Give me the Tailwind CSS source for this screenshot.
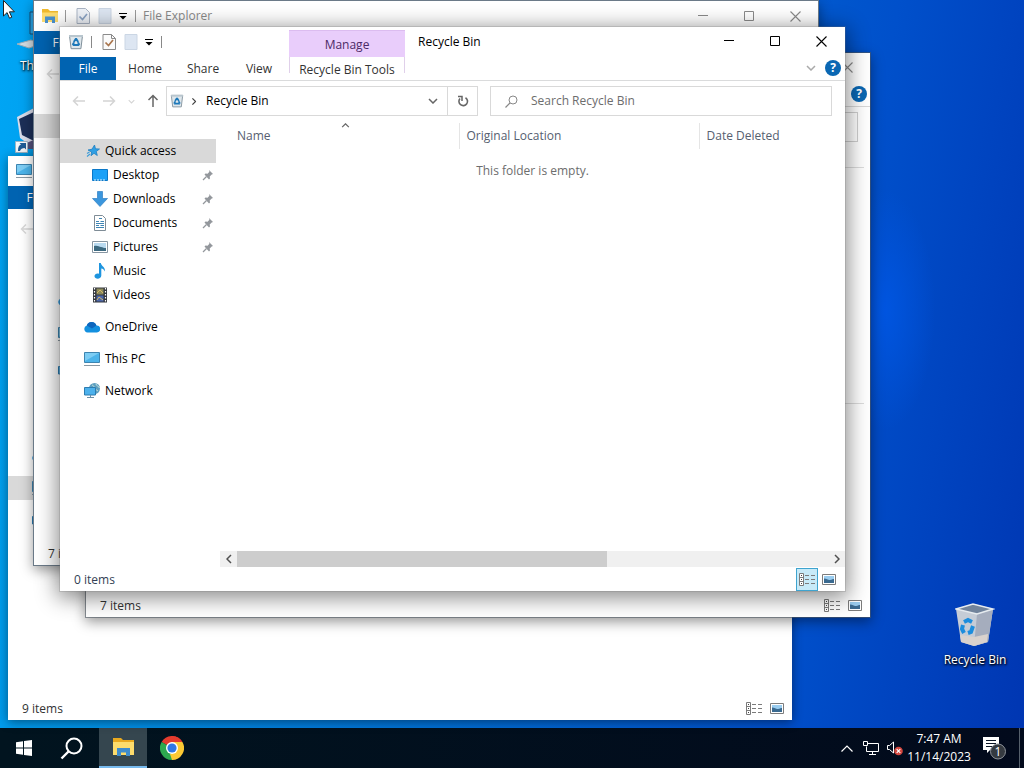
<!DOCTYPE html>
<html lang="en">
<head>
    <meta charset="UTF-8">
    <meta name="viewport" content="width=device-width, initial-scale=1.0">
    <title>Desktop</title>
    <script src="https://cdn.jsdelivr.net/npm/@tailwindcss/browser@4"></script>
</head>
<body class="h-screen overflow-hidden font-['Open_Sans','Noto_Sans',sans-serif] text-xs text-black">
    <!-- shared icons -->
    <svg class="hidden">
        <symbol id="i-bin" viewBox="0 0 16 16">
            <path d="M1.5 1.5h13l-1.6 13.2H3.1z" fill="#dfe7ec" stroke="#7f8f9a"/>
            <path d="M1 1h14v2H1z" fill="#b9c6ce"/>
            <path d="M8 4.6l2.2 3.4M8 4.6L5.8 8M4.6 11h6.8M4.6 11l1.4-2.6M11.4 11L10 8.4" stroke="#1d78b9" stroke-width="1.9" fill="none"/>
        </symbol>
        <symbol id="i-check" viewBox="0 0 14 16">
            <path d="M1 .5h8.5l4 4V15.5H1z" fill="#fbfbfb" stroke="#8a8a8a"/>
            <path d="M9.5 .5v4h4" fill="none" stroke="#8a8a8a"/>
            <path d="M3.5 8.5l3 3L11 6" fill="none" stroke="#a9754d" stroke-width="1.7"/>
        </symbol>
        <symbol id="i-check-off" viewBox="0 0 14 16">
            <path d="M1 .5h8.5l4 4V15.5H1z" fill="#eef2f8" stroke="#a9b4c4"/>
            <path d="M3.5 8.5l3 3L11 6" fill="none" stroke="#8ba3c4" stroke-width="1.7"/>
        </symbol>
        <symbol id="i-page" viewBox="0 0 14 16">
            <path d="M1 .5h12v15H1z" fill="#dde6f2" stroke="#cbd6e4"/>
        </symbol>
        <symbol id="i-more" viewBox="0 0 8 8">
            <path d="M0 1h8v1H0zM.5 4h7L4 7.5z" fill="currentColor"/>
        </symbol>
        <symbol id="i-folder" viewBox="0 0 18 16">
            <path d="M1 1h6l2 2h8v11H1z" fill="#efb92e"/>
            <path d="M1 4.5h16V14H1z" fill="#fcdb70"/>
            <path d="M4 15V8.5h10V15h-3v-3H7v3z" fill="#4a90cc"/>
        </symbol>
        <symbol id="i-star" viewBox="0 0 16 16">
            <path d="M9.5 2l1 3.800 4 .2-3.200 2.500 1 4-3.300-2.200-3 2.400.6-3.700L3 7l4-.8z" fill="#2f9fe4" stroke="#1f7fc0" stroke-width=".8"/>
            <path d="M2 13.500l3-2.500M2 10.500l2.500-1.500" stroke="#3f9dd8" stroke-width="1.2"/>
        </symbol>
        <symbol id="i-desktop" viewBox="0 0 16 14">
            <path d="M.5 1.500h15v11H.5z" fill="#1ba1f7" stroke="#0a78c8"/>
            <path d="M2 12h12" stroke="#e4f4ff" stroke-dasharray="2 1"/>
        </symbol>
        <symbol id="i-down" viewBox="0 0 16 16">
            <path d="M5.5 .5h5v7h5L8 15.500.5 7.500h5z" fill="#3b96dd" stroke="#2f7fc4" stroke-width=".7"/>
        </symbol>
        <symbol id="i-doc" viewBox="0 0 14 16">
            <path d="M1.5 .5h8l3 3v12h-11z" fill="#fff" stroke="#7f8c96"/>
            <path d="M3 6.500h3M7.500 6.500H11M3 8.500h8M3 10.500h3M7.500 10.500H11M3 12.500h8M6 3.500h3" stroke="#3f85b4"/>
        </symbol>
        <symbol id="i-pic" viewBox="0 0 16 12">
            <path d="M.5 .5h15v11H.5z" fill="#fff" stroke="#8796a2"/>
            <path d="M2 2h12v8H2z" fill="#b9daf0"/>
            <path d="M2 5c3-1 5 .5 7 1s3 1 5 1V10H2z" fill="#3c6980"/>
        </symbol>
        <symbol id="i-music" viewBox="0 0 12 16">
            <path d="M5 0h1.800c.3 3 4.700 4 4.200 8.500-.6-1.600-2-2.700-3.700-3V12.500c0 4.200-7.100 4-6.800.5.2-2.200 2.500-3 4.500-2.200z" fill="#1e95df"/>
        </symbol>
        <symbol id="i-video" viewBox="0 0 14 16">
            <path d="M0 .5h14v15H0z" fill="#33363c"/>
            <path d="M3.5 1.500h7v6h-7z" fill="#8c8a5c"/>
            <path d="M3.5 8.500h7v6h-7z" fill="#4a65a8"/>
            <path d="M4 6l3-3 3 3M4 13l2-3 4 3" stroke="#d6b865" fill="none"/>
            <path d="M1.5 1v14M12.5 1v14" stroke="#fff" stroke-width="1.2" stroke-dasharray="1.5 1.5"/>
        </symbol>
        <symbol id="i-cloud" viewBox="0 0 16 12">
            <path d="M3.500 11.500a3.600 3.600 0 0 1-.7-7A5 5 0 0 1 12.400 4.500a3.500 3.500 0 0 1 .6 7z" fill="#1490df"/>
            <path d="M2.800 4.500A5 5 0 0 1 12.400 4.500L8 7.500z" fill="#0f66bd"/>
        </symbol>
        <symbol id="i-pc" viewBox="0 0 16 16">
            <path d="M.5 1.500h15v10H.5z" fill="#4db4ea" stroke="#3d84b0"/>
            <path d="M1 2h14L1 10z" fill="#7dcdf4"/>
            <path d="M0 14.500h16" stroke="#8a98a2"/>
        </symbol>
        <symbol id="i-net" viewBox="0 0 16 16">
            <circle cx="10.500" cy="5.500" r="5.500" fill="#5d9fc0"/>
            <path d="M8 2c3 1 2 4 6 6M12 1c0 2 3 2 3.500 4" stroke="#c5dfd8" fill="none"/>
            <path d="M.5 4.500h11v7.500H.5z" fill="#4cb1ec" stroke="#2c7cb0"/>
            <path d="M3 14.500h7M6.500 12v2" stroke="#6c8fa6"/>
        </symbol>
        <symbol id="i-pin" viewBox="0 0 12 12">
            <path d="M7 1L11 5l-1.300.4-2 2 .3 2.100-1 1L2.500 5.500l1-1 2.100.3 1.800-2z" fill="#93979c"/>
            <path d="M4.500 7.500l-3.500 3.500" stroke="#93979c" stroke-width="1.3"/>
        </symbol>
        <symbol id="i-details" viewBox="0 0 17 13">
            <path d="M.5 .5h4v12h-4zM.5 4.500h4M.5 8.500h4" fill="#fff" stroke="#7b7b7b"/>
            <path d="M2 2.500h1M2 6.500h1M2 10.500h1" stroke="#444"/>
            <path d="M6 2.500h4M12 2.500h4M6 6.500h4M12 6.500h4M6 10.500h4M12 10.500h4" stroke="#7b7b7b"/>
        </symbol>
        <symbol id="i-thumbs" viewBox="0 0 14 11">
            <path d="M.5 .5h13v10H.5z" fill="#fff" stroke="#7c7c7c"/>
            <path d="M2 2h10v7H2z" fill="#9acdf0"/>
            <path d="M2 4.500c3 0 4 2 6 1.500s3-1 4-1V9H2z" fill="#3a6a90"/>
        </symbol>
        <symbol id="i-back" viewBox="0 0 14 12">
            <path d="M13 6H1.500M6 1.500L1.500 6 6 10.500" fill="none" stroke="currentColor" stroke-width="1.5"/>
        </symbol>
        <symbol id="i-close" viewBox="0 0 11 11">
            <path d="M.5 .5l10 10M10.5 .5l-10 10" stroke="currentColor" stroke-width="1.1"/>
        </symbol>
        <symbol id="i-max" viewBox="0 0 11 11"><path d="M.5 .5h9v9h-9z" fill="none" stroke="currentColor"/></symbol>
        <symbol id="i-min" viewBox="0 0 11 11"><path d="M0 4.500h10" stroke="currentColor"/></symbol>
        <symbol id="i-chev" viewBox="0 0 10 6"><path d="M1 1l4 4 4-4" fill="none" stroke="currentColor" stroke-width="1.5"/></symbol>
    </svg>

    <div class="flex h-full flex-col">
        <main class="relative flex-1 bg-[radial-gradient(ellipse_50px_120px_at_885px_310px,#0055e0_0%,transparent_100%),linear-gradient(100deg,#00a6f5_0%,#009fee_8%,#0074d8_45%,#0050cb_78%,#0044c0_88%,#0036b2_100%)]">

            <!-- desktop icons -->
            <div class="absolute left-3 top-2 w-10 text-white">
                <svg class="h-12 w-10" viewBox="0 0 40 48">
                    <path d="M18 4h20v22H18z" fill="#2aa8ec" stroke="#174e78"/>
                    <path d="M5 36l14-4 10 4-12 4z" fill="#d5dde3" stroke="#9fb0bb"/>
                </svg>
                <p class="pl-2 leading-5 [text-shadow:1px_1px_2px_#000,0_1px_3px_#000]">This</p>
            </div>
            <svg class="absolute left-3 top-[105px] h-12 w-8" viewBox="0 0 32 48">
                <path d="M5 12l17-9v40L8 33z" fill="#d9dcea"/>
                <path d="M7 14l15-7v29L10 30z" fill="#1c2f58"/>
                <path d="M12 39l12-5v10H12z" fill="#54517c"/>
                <path d="M3.5 36.500h12v11h-12z" fill="#f7f9fb" stroke="#9db6c7"/>
                <path d="M6 46c0-4 1-6 3-6.500L7.500 38H14v6.500L12.500 43c-2 0-4 1-4.500 3z" fill="#1f5d97"/>
            </svg>
            <div class="absolute right-3 top-[600px] flex w-[74px] flex-col items-center text-white">
                <svg class="h-12 w-10" viewBox="0 0 40 48">
                    <path d="M1 9l17-5 20 5-5 33-14 4L6 42z" fill="#c5ccd6"/>
                    <path d="M22 14l16-5-5 33-14 4z" fill="#a5adbd"/>
                    <path d="M1 9l17-5 20 5-16 5z" fill="#71839b" stroke="#e6ebef" stroke-width="1.5"/>
                    <path d="M5 35l14 2 14-3-1 8-13 4-13-4z" fill="#d9d2cd"/>
                    <path d="M9 22l4-2 4 2M18 26l-2 6-3 1M9 33l-2-4 1-4" fill="none" stroke="#1c8ddd" stroke-width="4"/>
                </svg>
                <p class="whitespace-nowrap leading-6 [text-shadow:1px_1px_2px_#000,0_1px_3px_#000]">Recycle Bin</p>
            </div>

            <!-- This PC window, at the back -->
            <section class="absolute left-2 top-[156px] flex h-[564px] w-[784px] flex-col bg-white [box-shadow:0_2px_10px_rgba(0,0,0,0.45)]">
                <div class="flex h-[30px] items-center pl-2"><svg class="size-4"><use href="#i-pc"/></svg></div>
                <div class="flex h-[23px]"><button class="w-14 bg-[#0063b1] text-white">File</button></div>
                <div class="flex h-10 items-center pl-3"><svg class="h-3 w-[14px] text-[#d8d8d8]"><use href="#i-back"/></svg></div>
                <div class="flex flex-1 flex-col pt-[195px]">
                    <div class="flex h-8 w-[156px] items-start pl-6 pt-[6px]"><svg class="h-3 w-4"><use href="#i-cloud"/></svg></div>
                    <div class="flex h-6 w-[156px] items-center bg-[#d9d9d9] pl-6"><svg class="size-4"><use href="#i-pc"/></svg></div>
                    <div class="mt-2 flex h-6 w-[156px] items-center pl-6"><svg class="size-4"><use href="#i-net"/></svg></div>
                </div>
                <div class="flex h-6 items-center gap-[7px] pl-[14px] pr-2 pt-px text-[#333]">
                    <span class="flex-1">9 items</span>
                    <svg class="h-[13px] w-[17px]"><use href="#i-details"/></svg>
                    <svg class="h-[11px] w-[14px]"><use href="#i-thumbs"/></svg>
                </div>
            </section>

            <!-- File Explorer window -->
            <section class="absolute left-[34px] top-px flex h-[564px] w-[784px] flex-col bg-white [box-shadow:0_0_0_1px_#6b7a88,0_4px_12px_1px_rgba(0,0,0,0.4)]">
                <div class="flex h-[30px] items-center text-[#8a8a8a]">
                    <div class="flex flex-1 items-center pl-[7px]">
                        <svg class="h-4 w-[18px]"><use href="#i-folder"/></svg>
                        <span class="ml-[6px] h-3 w-px bg-[#999]"></span>
                        <svg class="ml-[10px] h-4 w-[14px]"><use href="#i-check-off"/></svg>
                        <svg class="ml-2 h-4 w-[14px]"><use href="#i-page"/></svg>
                        <svg class="ml-[7px] size-2 text-black"><use href="#i-more"/></svg>
                        <span class="ml-2 h-3 w-px bg-[#999]"></span>
                        <span class="ml-[7px]">File Explorer</span>
                    </div>
                    <button class="flex w-[46px] justify-center" aria-label="Minimize"><svg class="size-[11px]"><use href="#i-min"/></svg></button>
                    <button class="flex w-[46px] justify-center" aria-label="Maximize"><svg class="size-[11px]"><use href="#i-max"/></svg></button>
                    <button class="flex w-[46px] justify-center" aria-label="Close"><svg class="size-[11px]"><use href="#i-close"/></svg></button>
                </div>
                <div class="flex h-[23px]"><button class="w-14 bg-[#0063b1] text-white">File</button></div>
                <div class="flex h-10 items-center pl-3"><svg class="h-3 w-[14px] text-[#d8d8d8]"><use href="#i-back"/></svg></div>
                <div class="flex flex-1 flex-col pt-5">
                    <div class="h-6 w-[156px] bg-[#d9d9d9]"></div>
                    <div class="mt-[156px] flex flex-col gap-5 pl-6">
                        <svg class="h-3 w-4"><use href="#i-cloud"/></svg>
                        <svg class="size-4"><use href="#i-pc"/></svg>
                        <svg class="size-4"><use href="#i-net"/></svg>
                    </div>
                </div>
                <div class="flex h-6 items-center pl-[14px] pt-px text-[#333]">7 items</div>
            </section>

            <!-- second File Explorer window -->
            <section class="absolute left-[86px] top-[53px] flex h-[564px] w-[784px] flex-col bg-white [box-shadow:0_0_0_1px_rgba(80,90,100,0.6),0_4px_12px_1px_rgba(0,0,0,0.4)]">
                <div class="flex h-[29px] items-center justify-end">
                    <button class="flex w-[46px] justify-center text-[#8a8a8a]" aria-label="Close"><svg class="size-[11px]"><use href="#i-close"/></svg></button>
                </div>
                <div class="flex h-[25px] items-center justify-end border-b border-[#d8d8d8] pr-[3px]">
                    <button class="size-4 rounded-full bg-[#0a67b3] text-center font-bold leading-4 text-white" aria-label="Help">?</button>
                </div>
                <div class="flex h-10 items-center justify-end pr-3"><div class="h-[30px] w-[342px] border border-[#d0d0d0]"></div></div>
                <div class="flex flex-1 flex-col pl-[160px] pr-[6px] pt-5">
                    <div class="h-[237px] border-y border-[#dcdcdc]"></div>
                </div>
                <div class="flex h-6 items-center gap-[7px] pl-[14px] pr-2 pt-px text-[#333]">
                    <span class="flex-1">7 items</span>
                    <svg class="h-[13px] w-[17px]"><use href="#i-details"/></svg>
                    <svg class="h-[11px] w-[14px]"><use href="#i-thumbs"/></svg>
                </div>
            </section>

            <!-- Recycle Bin window, active -->
            <section class="absolute left-[60px] top-[27px] flex h-[564px] w-[785px] flex-col bg-white [box-shadow:0_0_0_1px_rgba(120,120,120,0.25),0_4px_20px_3px_rgba(0,0,0,0.45)]">
                <header class="flex h-[54px] border-b border-[#dadbdc]">
                    <div class="flex w-[229px] flex-col">
                        <div class="flex h-[30px] items-center pl-2">
                            <svg class="size-4"><use href="#i-bin"/></svg>
                            <span class="ml-[7px] h-3 w-px bg-[#888]"></span>
                            <svg class="ml-[10px] h-4 w-[14px]"><use href="#i-check"/></svg>
                            <svg class="ml-2 h-4 w-[14px]"><use href="#i-page"/></svg>
                            <button class="ml-[7px]" aria-label="Customize toolbar"><svg class="size-2"><use href="#i-more"/></svg></button>
                            <span class="ml-2 h-3 w-px bg-[#888]"></span>
                        </div>
                        <nav class="flex h-[23px] text-[#333]">
                            <button class="w-14 bg-[#0063b1] pt-px text-white">File</button>
                            <button class="w-[58px] pt-px">Home</button>
                            <button class="w-[58px] pt-px">Share</button>
                            <button class="w-[54px] pt-px">View</button>
                        </nav>
                    </div>
                    <div class="flex w-[116px] flex-col pt-[3px]">
                        <div class="flex h-[27px] items-center justify-center border-t border-[#dcbcf0] bg-[#e9cdfb] pt-px text-[#4c2a66]">Manage</div>
                        <button class="h-4 border-x border-[#e0d0ea] pt-[5px] text-[#333]"><span class="whitespace-nowrap">Recycle Bin Tools</span></button>
                    </div>
                    <div class="flex flex-1 flex-col">
                        <div class="flex h-[29px] items-center pr-px">
                            <h1 class="flex-1 pl-[13px]">Recycle Bin</h1>
                            <button class="flex w-[46px] justify-center" aria-label="Minimize"><svg class="size-[11px]"><use href="#i-min"/></svg></button>
                            <button class="flex w-[46px] justify-center" aria-label="Maximize"><svg class="size-[11px]"><use href="#i-max"/></svg></button>
                            <button class="flex w-[46px] justify-center" aria-label="Close"><svg class="size-[11px]"><use href="#i-close"/></svg></button>
                        </div>
                        <div class="flex h-6 items-center justify-end gap-[9px] pr-1">
                            <button class="text-[#aaa]" aria-label="Expand ribbon"><svg class="h-[6px] w-[10px]"><use href="#i-chev"/></svg></button>
                            <button class="size-4 rounded-full bg-[#0a67b3] text-center font-bold leading-4 text-white" aria-label="Help">?</button>
                        </div>
                    </div>
                </header>

                <div class="flex h-10 items-center pr-[13px]">
                    <div class="flex w-[106px] items-center pl-3 text-[#d4d4d4]">
                        <button aria-label="Back"><svg class="h-3 w-[14px]"><use href="#i-back"/></svg></button>
                        <button class="ml-4 rotate-180" aria-label="Forward"><svg class="h-3 w-[14px]"><use href="#i-back"/></svg></button>
                        <button class="ml-3" aria-label="Recent"><svg class="h-[5px] w-[7px]"><use href="#i-chev"/></svg></button>
                        <button class="ml-[11px] rotate-90 text-[#666]" aria-label="Up"><svg class="h-3 w-[14px]"><use href="#i-back"/></svg></button>
                    </div>
                    <div class="flex h-[30px] flex-1 items-center border border-[#d9d9d9]">
                        <svg class="ml-[3px] size-[14px]"><use href="#i-bin"/></svg>
                        <svg class="ml-[6px] h-[5px] w-2 -rotate-90 text-[#444]"><use href="#i-chev"/></svg>
                        <span class="ml-2 flex-1">Recycle Bin</span>
                        <button class="mr-[9px] text-[#666]" aria-label="Previous locations"><svg class="h-[6px] w-[10px]"><use href="#i-chev"/></svg></button>
                        <button class="flex h-full w-[30px] items-center justify-center border-l border-[#d9d9d9] text-[#666]" aria-label="Refresh">
                            <svg class="size-3" viewBox="0 0 12 12"><path d="M8.500 2.700A4.300 4.300 0 1 1 3 3.500" fill="none" stroke="currentColor" stroke-width="1.6"/><path d="M1 1.500h4v4.500" fill="none" stroke="currentColor" stroke-width="1.5"/></svg>
                        </button>
                    </div>
                    <label class="ml-3 flex h-[30px] w-[342px] items-center border border-[#d9d9d9] pl-[14px]">
                        <svg class="size-[13px] shrink-0" viewBox="0 0 13 13"><circle cx="8" cy="5" r="4" fill="none" stroke="#888"/><path d="M5 8L.5 12.500" stroke="#888" stroke-width="1.2"/></svg>
                        <input type="search" placeholder="Search Recycle Bin" class="ml-[13px] min-w-0 flex-1 outline-none placeholder:text-[#6d6d6d]">
                    </label>
                </div>

                <div class="flex min-h-0 flex-1">
                    <nav class="w-[156px] pt-[18px]">
                        <a href="#" class="flex h-6 items-center gap-1 bg-[#d9d9d9] pl-[25px]"><svg class="size-4"><use href="#i-star"/></svg>Quick access</a>
                        <a href="#" class="flex h-6 items-center gap-[5px] pl-8 pr-[2px]"><svg class="h-[14px] w-4"><use href="#i-desktop"/></svg><span class="flex-1">Desktop</span><svg class="size-3"><use href="#i-pin"/></svg></a>
                        <a href="#" class="flex h-6 items-center gap-[5px] pl-8 pr-[2px]"><svg class="size-4"><use href="#i-down"/></svg><span class="flex-1">Downloads</span><svg class="size-3"><use href="#i-pin"/></svg></a>
                        <a href="#" class="flex h-6 items-center gap-[5px] pl-8 pr-[2px]"><svg class="size-4"><use href="#i-doc"/></svg><span class="flex-1">Documents</span><svg class="size-3"><use href="#i-pin"/></svg></a>
                        <a href="#" class="flex h-6 items-center gap-[5px] pl-8 pr-[2px]"><svg class="h-3 w-4"><use href="#i-pic"/></svg><span class="flex-1">Pictures</span><svg class="size-3"><use href="#i-pin"/></svg></a>
                        <a href="#" class="flex h-6 items-center gap-[5px] pl-8"><svg class="size-4"><use href="#i-music"/></svg>Music</a>
                        <a href="#" class="flex h-6 items-center gap-[5px] pl-8"><svg class="size-4"><use href="#i-video"/></svg>Videos</a>
                        <a href="#" class="mt-2 flex h-6 items-center gap-[5px] pl-6"><svg class="h-3 w-4"><use href="#i-cloud"/></svg>OneDrive</a>
                        <a href="#" class="mt-2 flex h-6 items-center gap-[5px] pl-6"><svg class="size-4"><use href="#i-pc"/></svg>This PC</a>
                        <a href="#" class="mt-2 flex h-6 items-center gap-[5px] pl-6"><svg class="size-4"><use href="#i-net"/></svg>Network</a>
                    </nav>
                    <div class="ml-1 flex flex-1 flex-col">
                        <table class="mt-[2px] w-full table-fixed text-left text-[#566070]">
                            <thead>
                                <tr class="h-[26px]">
                                    <th class="relative w-[239px] border-r border-[#e5e5e5] pl-[17px] font-normal">
                                        Name
                                        <svg class="absolute left-[121px] top-0 h-[5px] w-[9px] rotate-180 text-[#666]"><use href="#i-chev"/></svg>
                                    </th>
                                    <th class="w-60 border-r border-[#e5e5e5] pl-[7px] font-normal">Original Location</th>
                                    <th class="pl-[7px] font-normal">Date Deleted</th>
                                </tr>
                            </thead>
                        </table>
                        <p class="flex-1 pt-[14px] text-center text-[#6d6d6d]">This folder is empty.</p>
                        <div class="flex h-4 items-center bg-[#f0f0f0] text-[#505050]">
                            <button class="flex w-[17px] justify-center" aria-label="Scroll left"><svg class="h-[6px] w-[10px] rotate-90"><use href="#i-chev"/></svg></button>
                            <div class="flex h-full flex-1"><div class="w-[370px] bg-[#cdcdcd]"></div></div>
                            <button class="flex w-[17px] justify-center" aria-label="Scroll right"><svg class="h-[6px] w-[10px] -rotate-90"><use href="#i-chev"/></svg></button>
                        </div>
                    </div>
                </div>

                <footer class="flex h-6 items-center pl-[14px] pr-[5px] text-[#333f55]">
                    <span class="flex-1 pt-px">0 items</span>
                    <button class="flex h-[23px] w-[22px] items-center justify-center border border-[#3fa4cf] bg-[#c7eaf8]" aria-label="Details"><svg class="h-[13px] w-[17px] shrink-0"><use href="#i-details"/></svg></button>
                    <button class="flex h-[23px] w-[22px] items-center justify-center" aria-label="Large icons"><svg class="h-[11px] w-[14px]"><use href="#i-thumbs"/></svg></button>
                </footer>
            </section>

            <!-- mouse pointer -->
            <svg class="absolute left-[3px] top-0 z-10 h-[19px] w-3" viewBox="0 0 12 19"><path d="M.5 .5v15.500l3.600-3.400 2.400 5.600 2.300-1-2.400-5.400h5z" fill="#fff" stroke="#222"/></svg>
        </main>

        <footer class="flex h-10 items-stretch bg-linear-to-r from-[#01141f] to-[#020a1c] text-white">
            <button class="flex w-12 items-center justify-center" aria-label="Start">
                <svg class="size-4" viewBox="0 0 16 16"><path d="M0 2.300l7-1v6.200H0zM8 1.100L16 0v7.500H8zM0 8.500h7v6.200l-7-1zM8 8.500h8V16l-8-1.100z" fill="#fff"/></svg>
            </button>
            <button class="flex w-[51px] items-center justify-center pr-1" aria-label="Search">
                <svg class="size-[23px]" viewBox="0 0 23 23"><circle cx="14" cy="9" r="7.500" fill="none" stroke="#fff" stroke-width="2"/><path d="M8.500 14.500L1.500 21.500" stroke="#fff" stroke-width="2.400"/></svg>
            </button>
            <button class="flex w-12 items-center justify-center border-b-2 border-[#76b9ed] bg-[#35464f]" aria-label="File Explorer">
                <svg class="h-5 w-[23px]" viewBox="0 0 23 20"><path d="M1 1h8l2 2h11v15H1z" fill="#e9a91f"/><path d="M1 5h21v13H1z" fill="#fddc6c"/><path d="M5 19v-8h13v8h-4v-3.500H9V19z" fill="#3f8ccc"/></svg>
            </button>
            <button class="flex w-[50px] items-center justify-center" aria-label="Chrome">
                <svg class="size-6" viewBox="0 0 24 24">
                    <path d="M12 12L1.600 6A12 12 0 0 1 22.400 6z" fill="#e33b2e"/>
                    <path d="M12 12L22.400 6A12 12 0 0 1 12 24z" fill="#fcc934"/>
                    <path d="M12 12v12A12 12 0 0 1 1.600 6z" fill="#2da94f"/>
                    <path d="M12 6h10.400L17 15z" fill="#fcc934"/>
                    <path d="M12 6h10.400A12 12 0 0 0 12 0z" fill="#e33b2e"/>
                    <path d="M17 15l-5 9-2-6z" fill="#fcc934"/>
                    <path d="M1.600 6L7 15l5 3z" fill="#2da94f"/>
                    <circle cx="12" cy="12" r="6" fill="#fff"/>
                    <circle cx="12" cy="12" r="4.600" fill="#2f77e5"/>
                </svg>
            </button>
            <div class="flex-1"></div>
            <div class="flex items-center">
                <button aria-label="Show hidden icons"><svg class="h-[7px] w-3" viewBox="0 0 12 7"><path d="M.5 6.500L6 1l5.500 5.500" fill="none" stroke="#fff" stroke-width="1.2"/></svg></button>
                <svg class="ml-[10px] h-[14px] w-4" viewBox="0 0 16 14"><path d="M5 2.500h10.500v8H3.500V5.500M.5 .5h4v4h-4zM9.500 10.500v3M6 13.500h7" fill="none" stroke="#fff"/></svg>
                <svg class="ml-2 h-4 w-4" viewBox="0 0 16 16"><path d="M.5 5.500h2L6.500 2v11l-4-3.500h-2z" fill="none" stroke="#fff"/><circle cx="11.500" cy="11" r="4.300" fill="#d4473f"/><path d="M9.700 9.200l3.600 3.600M13.300 9.200l-3.600 3.600" stroke="#fff" stroke-width="1.2"/></svg>
            </div>
            <div class="ml-[6px] flex w-[60px] flex-col items-center justify-center whitespace-nowrap leading-[18px]">
                <span>7:47 AM</span>
                <span>11/14/2023</span>
            </div>
            <button class="ml-[13px] flex w-[37px] items-center" aria-label="Notifications">
                <svg class="h-6 w-[25px]" viewBox="0 0 25 24"><path d="M1 1h16v13H8l-3 3v-3H1z" fill="#fff"/><path d="M4 4.500h10M4 7.500h10M4 10.500h7" stroke="#0b1626"/><circle cx="16" cy="15.500" r="7.500" fill="#353a40" stroke="#8d9298"/><text x="16" y="20" text-anchor="middle" font-size="12" fill="#fff">1</text></svg>
            </button>
            <div class="w-[5px] border-l border-[#56606c]"></div>
        </footer>
    </div>
</body>
</html>
